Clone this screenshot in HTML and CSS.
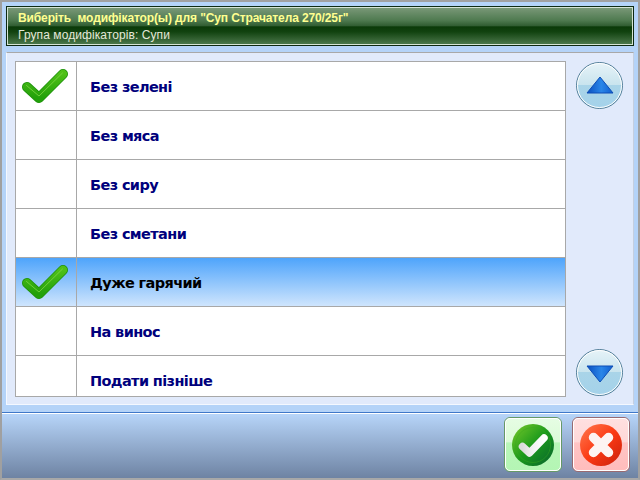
FILE: index.html
```html
<!DOCTYPE html>
<html lang="uk">
<head>
<meta charset="utf-8">
<title>Модифікатори</title>
<link rel="stylesheet" href="styles.css">
</head>
<body>
<svg class="defs" width="0" height="0" aria-hidden="true">
  <defs>
    <linearGradient id="chk" x1="0" y1="0" x2="0" y2="1">
      <stop offset="0" stop-color="#4fc018"/><stop offset="1" stop-color="#22a00a"/>
    </linearGradient>
    <linearGradient id="tickWhite" x1="0" y1="0" x2="1" y2="0">
      <stop offset="0" stop-color="#dcdcdc"/><stop offset=".4" stop-color="#f0f0f0"/><stop offset="1" stop-color="#ffffff"/>
    </linearGradient>
    <symbol id="tick" viewBox="0 0 46 36">
      <path d="M5 19 L17 30 L41 6" fill="none" stroke="#1f930c" stroke-width="10" stroke-linecap="round" stroke-linejoin="round"/>
      <path d="M5 19 L17 30 L41 6" fill="none" stroke="url(#chk)" stroke-width="8.4" stroke-linecap="round" stroke-linejoin="round"/>
      <path d="M4.5 17.5 L17 28 L40.5 5" fill="none" stroke="#7ed646" stroke-opacity=".8" stroke-width="1" stroke-linecap="round" stroke-linejoin="round"/>
    </symbol>
    <linearGradient id="arrowFill" x1="0" y1="0" x2="1" y2="0">
      <stop offset="0" stop-color="#0a4fc0"/><stop offset=".55" stop-color="#2a86e8"/><stop offset="1" stop-color="#0f5ed0"/>
    </linearGradient>
    <linearGradient id="gBall" x1="0" y1="0" x2="1" y2="1">
      <stop offset="0" stop-color="#7acb2a"/><stop offset=".5" stop-color="#1c9a1c"/><stop offset="1" stop-color="#07622f"/>
    </linearGradient>
    <linearGradient id="rBall" x1="0" y1="0" x2="1" y2="1">
      <stop offset="0" stop-color="#ff7a50"/><stop offset=".5" stop-color="#fb3a14"/><stop offset="1" stop-color="#c9200c"/>
    </linearGradient>
  </defs>
</svg>
<div class="window">
  <header class="title">
    <div class="title-main">Виберіть&nbsp; модифікатор(ы) для "Суп Страчатела 270/25г"</div>
    <div class="title-sub">Група модифікаторів: Супи</div>
  </header>
  <main class="panel">
    <div class="list">
      <div class="row"><div class="mark"><svg class="tick"><use href="#tick"/></svg></div><div class="name">Без зелені</div></div>
      <div class="row"><div class="mark"></div><div class="name">Без мяса</div></div>
      <div class="row"><div class="mark"></div><div class="name">Без сиру</div></div>
      <div class="row"><div class="mark"></div><div class="name">Без сметани</div></div>
      <div class="row selected"><div class="mark"><svg class="tick"><use href="#tick"/></svg></div><div class="name">Дуже гарячий</div></div>
      <div class="row"><div class="mark"></div><div class="name">На винос</div></div>
      <div class="row"><div class="mark"></div><div class="name">Подати пізніше</div></div>
    </div>
    <div class="scroll">
      <button class="round" aria-label="Вгору"><svg width="28" height="20" viewBox="0 0 28 20"><path d="M14 1 L27 17 H1 Z" fill="url(#arrowFill)" stroke="#0d4db5" stroke-linejoin="round"/></svg></button>
      <button class="round" aria-label="Вниз"><svg width="28" height="20" viewBox="0 0 28 20"><path d="M1 3 H27 L14 19 Z" fill="url(#arrowFill)" stroke="#0d4db5" stroke-linejoin="round"/></svg></button>
    </div>
  </main>
  <footer class="footer">
    <button class="action ok" aria-label="OK"><svg width="44" height="44" viewBox="0 0 44 44"><circle cx="22" cy="22" r="21" fill="url(#gBall)"/><circle cx="22" cy="22" r="17.5" fill="none" stroke="#3aa820" stroke-opacity=".45"/><path d="M11.5 23.5 L18.5 30 L33 15" fill="none" stroke="url(#tickWhite)" stroke-width="7.5" stroke-linecap="round" stroke-linejoin="round"/></svg></button>
    <button class="action cancel" aria-label="Скасувати"><svg width="44" height="44" viewBox="0 0 44 44"><circle cx="22" cy="22" r="21" fill="url(#rBall)"/><path d="M14.5 14.5 L29.5 29.5 M29.5 14.5 L14.5 29.5" fill="none" stroke="#fdf4f2" stroke-width="9.5" stroke-linecap="round"/></svg></button>
  </footer>
</div>
</body>
</html>
```

FILE: styles.css
```css
* { box-sizing: border-box; }
html, body { margin: 0; padding: 0; }
body { width: 640px; height: 480px; overflow: hidden; background: #b4d3f8; }
.defs { position: absolute; }

.window {
  width: 640px;
  height: 480px;
  display: flex;
  flex-direction: column;
  border: 2px solid #a0a0a0;
  border-bottom-color: #a8a8a8;
  background: #b4d3f8;
}

.title {
  height: 40px;
  margin: 4px 4px 0 4px;
  padding: 3px 0 0 11px;
  border: 1px solid #0d2a12;
  outline: 1px solid #d5e4d5;
  outline-offset: -2px;
  background: linear-gradient(#7c9a7a 0, #4f7a50 35%, #2f5c30 50%, #0a3a08 52%, #11420f 65%, #4e7a4e 100%);
  font-family: "Liberation Sans", Arial, sans-serif;
  font-size: 12px;
  line-height: 16px;
}
.title-main { color: #ffff90; font-weight: bold; letter-spacing: -0.12px; }
.title-sub { color: #e4e8d8; margin-top: 1px; letter-spacing: 0.08px; }

.panel {
  height: 353px;
  margin: 6px 4px 0 4px;
  padding: 8px 0 7px 8px;
  display: flex;
  background: #e1eafb;
  border-top: 1px solid #a8a8a8;
  border-right: 1px solid #c4cfe0;
  border-bottom: 1px solid #f4f8ff;
  border-left: 1px solid #f4f8ff;
}

.list {
  width: 551px;
  height: 336px;
  overflow: hidden;
  background: #fff;
  border: 1px solid #a8a8a8;
}

.row {
  display: flex;
  height: 49px;
  flex: none;
  border-bottom: 1px solid #a8a8a8;
  background: #fff;
}
.row.selected { background: linear-gradient(#4ea4fb, #cfe5fd); }

.mark {
  width: 61px;
  flex: none;
  padding-right: 2px;
  border-right: 1px solid #a8a8a8;
  display: flex;
  align-items: center;
  justify-content: center;
}
.tick { width: 46px; height: 36px; }

.name {
  padding: 2px 0 0 13px;
  display: flex;
  align-items: center;
  font-family: "DejaVu Sans", Verdana, sans-serif;
  font-weight: bold;
  font-size: 14.5px;
  letter-spacing: -0.62px;
  color: #00007c;
}
.row.selected .name { color: #000; }

.scroll {
  flex: 1;
  padding: 1px 0 1px 10px;
  display: flex;
  flex-direction: column;
  justify-content: space-between;
}

.round {
  width: 47px;
  height: 47px;
  padding: 0;
  border-radius: 50%;
  border: 1px solid #4f7c96;
  outline: 1px solid #fff;
  outline-offset: -2px;
  background: linear-gradient(#e6f3f8 0, #c9e4ee 48%, #a9d4e8 50%, #a4d2ea 100%);
  display: flex;
  align-items: center;
  justify-content: center;
}

.footer {
  flex: 1;
  margin: 7px 0 0 0;
  padding: 4px 8px 0 0;
  border-top: 1px solid #3f78c8;
  box-shadow: inset 0 1px 0 #fff;
  background: linear-gradient(#b8d6fa, #6e83a3);
  display: flex;
  justify-content: flex-end;
  gap: 10px;
}

.action {
  width: 58px;
  height: 55px;
  padding: 0;
  border-radius: 6px;
  display: flex;
  align-items: center;
  justify-content: center;
  outline: 1px solid #fff;
  outline-offset: -2px;
}
.ok { border: 1px solid #669966; background: linear-gradient(#e6fde4 0, #dcfbd8 45%, #b9f7b8 47%, #b4f5b4 100%); }
.cancel { border: 1px solid #996a70; background: linear-gradient(#ffe0e0 0, #ffd8d8 45%, #ffc4c4 47%, #ffbcbc 100%); }
```
